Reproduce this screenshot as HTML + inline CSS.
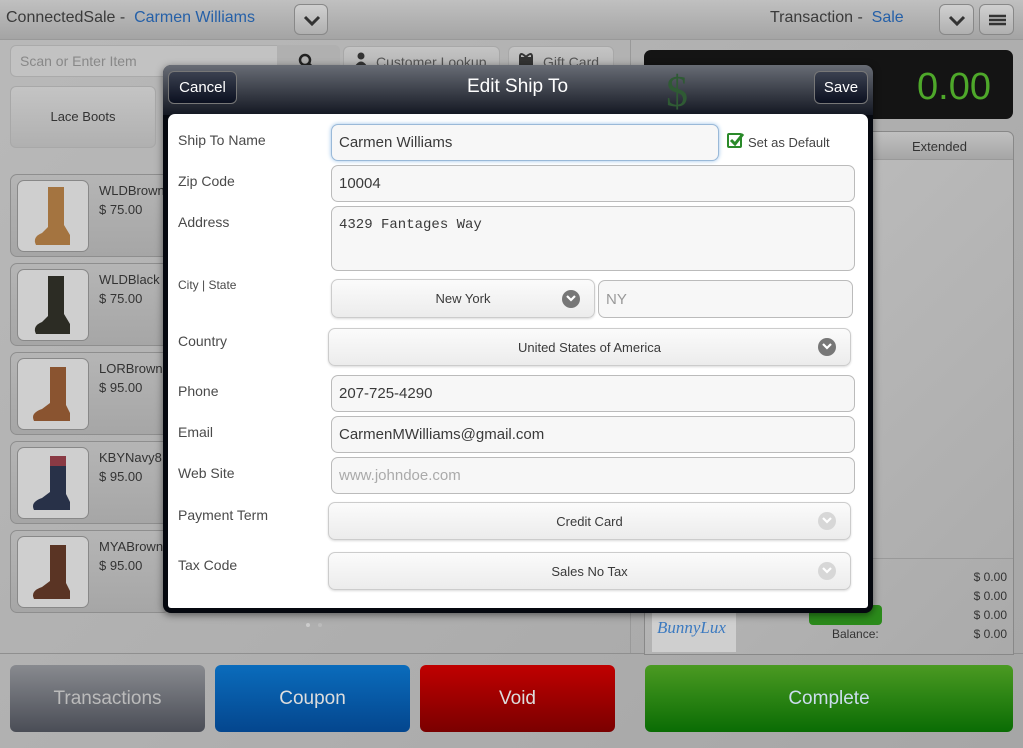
<!DOCTYPE html>
<html><head><meta charset="utf-8"><style>
*{box-sizing:border-box;margin:0;padding:0}
body{width:1023px;height:748px;overflow:hidden;position:relative;font-family:"Liberation Sans",sans-serif;background:linear-gradient(135deg,#b9b9b9,#a6a6a6);color:#3a3a3a}
.a{position:absolute}
.hdr{left:0;top:0;width:1023px;height:40px;background:linear-gradient(#c0c0c0,#a4a4a4);border-bottom:1px solid #999}
.ib{border:1px solid #888;border-radius:6px;background:linear-gradient(#d0d0d0,#b0b0b0)}
.t{font-size:16px;color:#3a3a3a}
.blue{color:#2560a8}
.tile{border-radius:6px;background:linear-gradient(#c4c4c4,#b0b0b0);border:1px solid #a8a8a8}
.prod{left:10px;width:160px;height:83px;border:1px solid #8e8e8e;border-radius:7px;background:linear-gradient(#b5b5b5,#a6a6a6)}
.pimg{position:absolute;left:6px;top:5px;width:72px;height:72px;border:1px solid #888;border-radius:7px;background:#cfcfcf;overflow:hidden}
.pn{position:absolute;left:88px;top:8px;font-size:13px;color:#333}
.pp{position:absolute;left:88px;top:27px;font-size:13px;color:#333}
.btn{top:665px;height:67px;border-radius:6px;color:#ddd;font-size:19px;display:flex;align-items:center;justify-content:center}
.lbl{left:178px;font-size:14px;color:#4a4a4a}
.in{border:1px solid #bbb;border-radius:7px;background:#f7f7f7;font-size:15px;color:#3a3a3a;padding-left:7px;display:flex;align-items:center}
.sel{border:1px solid #ccc;border-radius:7px;background:linear-gradient(#fbfbfb,#ececec);box-shadow:0 1px 2px rgba(0,0,0,.15);font-size:13px;color:#3a3a3a;display:flex;align-items:center;justify-content:center}
.ch{position:absolute;width:18px;height:18px;border-radius:50%;background:#777;top:50%;margin-top:-9px}
.ch.l{background:#d7d7d7}
.ch svg{position:absolute;left:4px;top:5px}
.mb{border:1px solid #777;border-radius:6px;background:linear-gradient(#3b4150,#0b1020);color:#fff;font-size:15px;display:flex;align-items:center;justify-content:center}
.r{font-size:12px;color:#333;text-align:right}
</style></head><body>
<div class="a hdr"></div>
<div class="a t" style="left:6px;top:9px">ConnectedSale - &nbsp;<span class="blue">Carmen Williams</span></div>
<div class="a ib" style="left:294px;top:4px;width:34px;height:31px"><svg width="34" height="31"><path d="M10 12l7 7 7-7" stroke="#333" stroke-width="3" fill="none"/></svg></div>
<div class="a t" style="left:770px;top:9px">Transaction - &nbsp;<span class="blue">Sale</span></div>
<div class="a ib" style="left:939px;top:4px;width:35px;height:31px"><svg width="35" height="31"><path d="M10 12l7 7 7-7" stroke="#333" stroke-width="3" fill="none"/></svg></div>
<div class="a ib" style="left:979px;top:4px;width:35px;height:31px"><svg width="35" height="31"><path d="M9 11h17M9 15h17M9 19h17" stroke="#333" stroke-width="2.5"/></svg></div>

<div class="a" style="left:10px;top:45px;width:330px;height:32px;border:1px solid #aaa;border-radius:6px;background:#c2c2c2"></div>
<div class="a" style="left:277px;top:45px;width:63px;height:32px;background:#b0b0b0;border-radius:0 6px 6px 0"></div>
<svg class="a" style="left:297px;top:52px" width="20" height="20"><circle cx="8" cy="8" r="5" stroke="#222" stroke-width="2.5" fill="none"/><path d="M12 12l5 5" stroke="#222" stroke-width="3"/></svg>
<div class="a" style="left:20px;top:53px;font-size:14px;color:#888">Scan or Enter Item</div>
<div class="a tile" style="left:343px;top:46px;width:157px;height:30px;font-size:14px;color:#555;padding:7px 0 0 32px">Customer Lookup</div>
<svg class="a" style="left:354px;top:52px" width="14" height="14"><circle cx="7" cy="4" r="3.5" fill="#333"/><path d="M1 14q6-9 12 0z" fill="#333"/></svg>
<div class="a tile" style="left:508px;top:46px;width:106px;height:30px;font-size:14px;color:#555;padding:7px 0 0 34px">Gift Card</div>
<svg class="a" style="left:518px;top:52px" width="16" height="14"><rect x="1" y="5" width="14" height="9" fill="#333"/><path d="M8 5q-6-6-6 0M8 5q6-6 6 0" stroke="#333" stroke-width="2" fill="none"/></svg>
<div class="a tile" style="left:10px;top:86px;width:146px;height:62px;font-size:13px;color:#333;text-align:center;padding-top:22px">Lace Boots</div>
<div class="a tile" style="left:163px;top:86px;width:146px;height:62px"></div>
<div class="a tile" style="left:316px;top:86px;width:146px;height:62px"></div>
<div class="a tile" style="left:469px;top:86px;width:146px;height:62px"></div>

<div class="a prod" style="top:174px"><div class="pimg"><svg width="72" height="72"><path d="M30 6h16v38l6 10v10H18q-4-8 6-12l6-6z" fill="#a47440"/></svg></div><div class="pn">WLDBrown</div><div class="pp">$ 75.00</div></div>
<div class="a prod" style="top:263px"><div class="pimg"><svg width="72" height="72"><path d="M30 6h16v38l6 10v10H18q-4-8 6-12l6-6z" fill="#2c2c24"/></svg></div><div class="pn">WLDBlack</div><div class="pp">$ 75.00</div></div>
<div class="a prod" style="top:352px"><div class="pimg"><svg width="72" height="72"><path d="M32 8h16v38l4 8v8H16q-4-8 8-12l8-6z" fill="#8a5430"/></svg></div><div class="pn">LORBrown</div><div class="pp">$ 95.00</div></div>
<div class="a prod" style="top:441px"><div class="pimg"><svg width="72" height="72"><path d="M32 8h16v38l4 8v8H16q-4-8 8-12l8-6z" fill="#283148"/><rect x="32" y="8" width="16" height="10" fill="#8a3a44"/></svg></div><div class="pn">KBYNavy8</div><div class="pp">$ 95.00</div></div>
<div class="a prod" style="top:530px"><div class="pimg"><svg width="72" height="72"><path d="M32 8h16v38l4 8v8H16q-4-8 8-12l8-6z" fill="#5a3424"/></svg></div><div class="pn">MYABrown</div><div class="pp">$ 95.00</div></div>

<div class="a" style="left:0;top:653px;width:1023px;height:1px;background:#8f8f8f"></div>
<div class="a" style="left:630px;top:40px;width:1px;height:613px;background:#999"></div>

<div class="a" style="left:644px;top:50px;width:369px;height:69px;background:#141414;border-radius:7px"></div>
<div class="a" style="left:917px;top:66px;font-size:38px;color:#4ea82a">0.00</div>
<div class="a" style="left:644px;top:131px;width:370px;height:524px;border:1px solid #888;border-radius:7px 7px 0 0;background:linear-gradient(135deg,#c0c0c0,#aaaaaa)"></div>
<div class="a" style="left:645px;top:132px;width:368px;height:28px;background:linear-gradient(#c0c0c0,#a6a6a6);border-bottom:1px solid #999;border-radius:7px 7px 0 0"></div>
<div class="a" style="left:912px;top:139px;font-size:13px;color:#333">Extended</div>
<div class="a" style="left:645px;top:558px;width:368px;height:1px;background:#999"></div>
<div class="a" style="left:652px;top:600px;width:84px;height:52px;background:#cfcfcf;color:#3c7ac0;font-family:'Liberation Serif',serif;font-style:italic;font-size:17px;padding:18px 0 0 5px">BunnyLux</div>
<div class="a" style="left:809px;top:605px;width:73px;height:20px;background:#2b8a1b;border-radius:4px"></div>
<div class="a r" style="left:832px;top:627px">Balance:</div>
<div class="a r" style="left:960px;top:570px;width:47px">$ 0.00</div>
<div class="a r" style="left:960px;top:589px;width:47px">$ 0.00</div>
<div class="a r" style="left:960px;top:608px;width:47px">$ 0.00</div>
<div class="a r" style="left:960px;top:627px;width:47px">$ 0.00</div>

<div class="a btn" style="left:10px;width:195px;background:linear-gradient(#888a8f,#4a4d56);color:#bbb">Transactions</div>
<div class="a btn" style="left:215px;width:195px;background:linear-gradient(#0a6cbc,#04468e)">Coupon</div>
<div class="a btn" style="left:420px;width:195px;background:linear-gradient(#c00000,#7a0000)">Void</div>
<div class="a btn" style="left:645px;width:368px;background:linear-gradient(#4b9a22,#0a6c04);color:#cde">Complete</div>
<div class="a" style="left:306px;top:623px;width:4px;height:4px;border-radius:50%;background:#ccc"></div>
<div class="a" style="left:318px;top:623px;width:4px;height:4px;border-radius:50%;background:#bbb"></div>

<!-- modal -->
<div class="a" style="left:163px;top:65px;width:710px;height:548px;border-radius:8px;background:#05080f;box-shadow:0 2px 8px rgba(0,0,0,.5)"></div>
<div class="a" style="left:163px;top:65px;width:710px;height:50px;border-radius:8px 8px 0 0;background:linear-gradient(rgba(170,175,185,.6),rgba(20,24,35,.95));"></div>
<div class="a" style="left:666px;top:66px;font-size:44px;color:#2f5a34;font-family:'Liberation Serif',serif">$</div>
<div class="a" style="left:467px;top:76px;font-size:19px;color:#fff">Edit Ship To</div>
<div class="a mb" style="left:168px;top:71px;width:69px;height:33px">Cancel</div>
<div class="a mb" style="left:814px;top:71px;width:54px;height:33px">Save</div>
<div class="a" style="left:168px;top:114px;width:700px;height:494px;background:#fff;border-radius:7px 7px 3px 3px"></div>

<div class="a lbl" style="top:132px">Ship To Name</div>
<div class="a lbl" style="top:173px">Zip Code</div>
<div class="a lbl" style="top:214px">Address</div>
<div class="a lbl" style="top:278px;font-size:12px">City | State</div>
<div class="a lbl" style="top:333px">Country</div>
<div class="a lbl" style="top:383px">Phone</div>
<div class="a lbl" style="top:424px">Email</div>
<div class="a lbl" style="top:465px">Web Site</div>
<div class="a lbl" style="top:507px">Payment Term</div>
<div class="a lbl" style="top:557px">Tax Code</div>

<div class="a in" style="left:331px;top:124px;width:388px;height:37px;border-color:#9ab9d8;box-shadow:0 0 4px #9cc3e8">Carmen Williams</div>
<div class="a" style="left:727px;top:133px;width:15px;height:15px;border:2px solid #2a8a2a;border-radius:2px"><svg class="a" style="left:0;top:-3px" width="16" height="16"><path d="M2 8l4 4 8-10" stroke="#2a8a2a" stroke-width="3" fill="none"/></svg></div>
<div class="a" style="left:748px;top:135px;font-size:13px;color:#444">Set as Default</div>
<div class="a in" style="left:331px;top:165px;width:524px;height:37px">10004</div>
<div class="a in" style="left:331px;top:206px;width:524px;height:65px;align-items:flex-start;padding-top:10px;font-family:'Liberation Mono',monospace;font-size:14px">4329 Fantages Way</div>
<div class="a sel" style="left:331px;top:279px;width:264px;height:39px">New York<div class="ch" style="left:230px"><svg width="10" height="8"><path d="M1 1l4 4 4-4" stroke="#fff" stroke-width="2.2" fill="none"/></svg></div></div>
<div class="a in" style="left:598px;top:280px;width:255px;height:38px;color:#999">NY</div>
<div class="a sel" style="left:328px;top:328px;width:523px;height:38px">United States of America<div class="ch" style="left:489px"><svg width="10" height="8"><path d="M1 1l4 4 4-4" stroke="#fff" stroke-width="2.2" fill="none"/></svg></div></div>
<div class="a in" style="left:331px;top:375px;width:524px;height:37px">207-725-4290</div>
<div class="a in" style="left:331px;top:416px;width:524px;height:37px">CarmenMWilliams@gmail.com</div>
<div class="a in" style="left:331px;top:457px;width:524px;height:37px;color:#aaa">www.johndoe.com</div>
<div class="a sel" style="left:328px;top:502px;width:523px;height:38px">Credit Card<div class="ch l" style="left:489px"><svg width="10" height="8"><path d="M1 1l4 4 4-4" stroke="#fff" stroke-width="2.2" fill="none"/></svg></div></div>
<div class="a sel" style="left:328px;top:552px;width:523px;height:38px">Sales No Tax<div class="ch l" style="left:489px"><svg width="10" height="8"><path d="M1 1l4 4 4-4" stroke="#fff" stroke-width="2.2" fill="none"/></svg></div></div>
</body></html>
